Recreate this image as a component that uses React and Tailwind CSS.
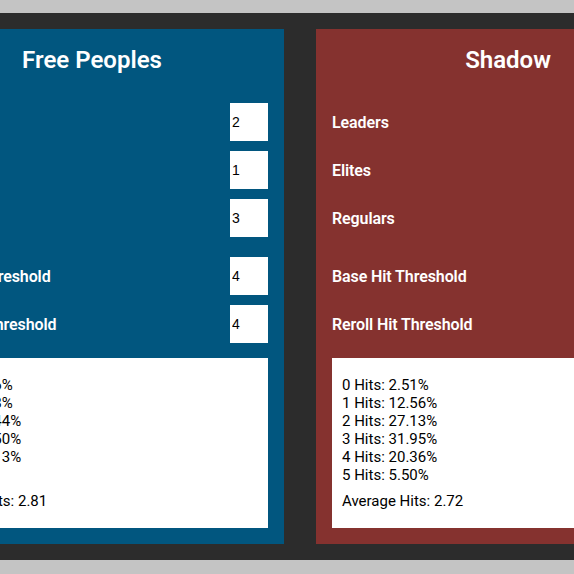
import React from 'react';

const sides = [
  {
    name: 'Free Peoples',
    bg: 'bg-[#01567f]',
    values: { leaders: 2, elites: 1, regulars: 3, base: 4, reroll: 4 },
    hits: ['1.56%', '9.38%', '23.44%', '37.50%', '28.13%'],
    average: '2.81',
  },
  {
    name: 'Shadow',
    bg: 'bg-[#85322f]',
    values: { leaders: 1, elites: 2, regulars: 4, base: 5, reroll: 5 },
    hits: ['2.51%', '12.56%', '27.13%', '31.95%', '20.36%', '5.50%'],
    average: '2.72',
  },
];

function Row({ label, value }) {
  return (
    <div className="flex items-center justify-between h-[38px]">
      <span className="text-white font-semibold text-[16px] tracking-[-0.1px] pt-[2px]">{label}</span>
      <input
        type="text"
        readOnly
        value={value}
        className="w-[38px] h-[38px] bg-white text-black px-[2px] text-[14px] font-['Liberation_Sans',Arial,sans-serif] outline-none"
      />
    </div>
  );
}

function Panel({ side }) {
  const v = side.values;
  return (
    <div className={`w-[384px] shrink-0 ${side.bg} p-4 flex flex-col`}>
      <h2 className="text-white text-[24px] leading-7 font-semibold text-center mt-[1px]">{side.name}</h2>

      <div className="mt-[29px] flex flex-col gap-[10px]">
        <Row label="Leaders" value={v.leaders} />
        <Row label="Elites" value={v.elites} />
        <Row label="Regulars" value={v.regulars} />
      </div>

      <div className="mt-[20px] flex flex-col gap-[10px]">
        <Row label="Base Hit Threshold" value={v.base} />
        <Row label="Reroll Hit Threshold" value={v.reroll} />
      </div>

      <div className="mt-[15px] flex-1 bg-white px-[10px] pt-[18px] pb-[18px] flex flex-col text-[15px] leading-[18px] text-black">
        <div className="mb-[8px]">
          {side.hits.map((h, i) => (
            <div key={i}>{i} Hits: {h}</div>
          ))}
        </div>
        <div className="mt-auto">Average Hits: {side.average}</div>
      </div>
    </div>
  );
}

export default function App() {
  return (
    <div className="w-full h-[574px] overflow-hidden bg-[#c4c4c4] pt-[13px] font-['Roboto','Liberation_Sans',sans-serif]">
      <div className="ml-[-116px] w-[832px] bg-[#2c2c2c] p-4 flex gap-8">
        {sides.map((s) => (
          <Panel key={s.name} side={s} />
        ))}
      </div>
    </div>
  );
}
